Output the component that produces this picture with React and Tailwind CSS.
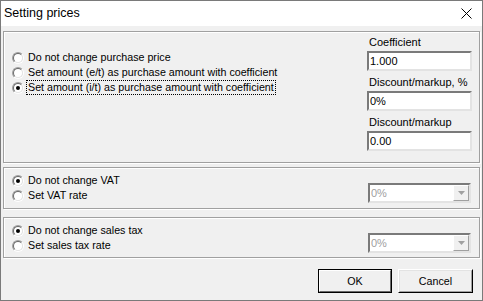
import React from "react";

const font = "font-['Liberation_Sans',Arial,sans-serif]";

function Radio({ checked }) {
  return (
    <span className="w-[12px] h-[12px] shrink-0 rounded-full border border-t-[#a0a0a0] border-l-[#a0a0a0] border-r-[#ffffff] border-b-[#ffffff] bg-[#e3e3e3] flex items-center justify-center">
      <span className="w-[10px] h-[10px] rounded-full bg-white border border-t-[#696969] border-l-[#696969] border-r-[#e3e3e3] border-b-[#e3e3e3] flex items-center justify-center">
        {checked && <span className="w-[4px] h-[4px] rounded-full bg-black" />}
      </span>
    </span>
  );
}

function Option({ checked, label, focused }) {
  return (
    <div className="flex items-center h-[15px]">
      <Radio checked={checked} />
      <span
        className={
          focused
            ? "ml-[3px] px-[1px] leading-[13px] outline-1 outline-dotted outline-black"
            : "ml-[4px] leading-[13px]"
        }
      >
        {label}
      </span>
    </div>
  );
}

function Field({ label, value }) {
  return (
    <div className="flex flex-col">
      <span className="leading-[13px] h-[15px] pl-[2px] text-[11px]">{label}</span>
      <div className="w-[105px] h-[20px] bg-white border-2 border-t-[#7a7a7a] border-l-[#7a7a7a] border-r-[#e3e3e3] border-b-[#e3e3e3] flex items-center pl-[1px] text-[11px]">
        {value}
      </div>
    </div>
  );
}

function Combo() {
  return (
    <div className="w-[103px] h-[20px] mt-[15px] bg-white border-2 border-t-[#7a7a7a] border-l-[#7a7a7a] border-r-[#e3e3e3] border-b-[#e3e3e3] flex items-center">
      <span className="flex-1 pl-[1px] text-[#a0a0a0] text-[11px]">0%</span>
      <span className="w-[16px] h-full bg-[#f0f0f0] border border-t-[#ffffff] border-l-[#ffffff] border-r-[#a0a0a0] border-b-[#a0a0a0] flex items-center justify-center">
        <svg width="7" height="4" viewBox="0 0 7 4">
          <path d="M0 0h7L3.5 4z" fill="#a0a0a0" />
        </svg>
      </span>
    </div>
  );
}

const panel =
  "border border-[#a0a0a0] shadow-[inset_1px_1px_0_#ffffff,1px_1px_0_#ffffff]";

export default function App() {
  return (
    <div
      className={`${font} text-[10.7px] text-black w-[483px] h-[301px] border border-[#7a7a7a] flex flex-col bg-[#f0f0f0]`}
    >
      {/* Title bar */}
      <div className="h-[25px] bg-white flex items-center justify-between pl-[3px] pr-[10px] shrink-0">
        <span className="text-[12.5px]">Setting prices</span>
        <svg width="11" height="11" viewBox="0 0 11 11">
          <path d="M0.5 0.5l10 10M10.5 0.5l-10 10" stroke="#000" strokeWidth="1" />
        </svg>
      </div>

      <div className="flex flex-col px-[2px] pt-[5px]">
        {/* Purchase price */}
        <div className={`${panel} h-[132px] flex justify-between`}>
          <div className="flex flex-col pl-[8px] pt-[18px]">
            <Option label="Do not change purchase price" />
            <Option label="Set amount (e/t) as purchase amount with coefficient" />
            <Option checked focused label="Set amount (i/t) as purchase amount with coefficient" />
          </div>
          <div className="flex flex-col gap-[5px] pt-[4px] pr-[7px]">
            <Field label="Coefficient" value="1.000" />
            <Field label="Discount/markup, %" value="0%" />
            <Field label="Discount/markup" value="0.00" />
          </div>
        </div>

        {/* VAT */}
        <div className={`${panel} mt-[4px] h-[42px] flex items-start justify-between px-[8px]`}>
          <div className="flex flex-col pt-[5px]">
            <Option checked label="Do not change VAT" />
            <Option label="Set VAT rate" />
          </div>
          <Combo />
        </div>

        {/* Sales tax */}
        <div className={`${panel} mt-[8px] h-[41px] flex items-start justify-between px-[8px]`}>
          <div className="flex flex-col pt-[5px]">
            <Option checked label="Do not change sales tax" />
            <Option label="Set sales tax rate" />
          </div>
          <Combo />
        </div>

        {/* Buttons */}
        <div className="flex justify-end gap-[6px] mt-[11px] pr-[7px]">
          <button className="w-[74px] h-[24px] border border-black bg-[#f0f0f0] p-0">
            <span className="flex w-full h-full items-center justify-center border border-t-[#ffffff] border-l-[#ffffff] border-r-[#696969] border-b-[#696969]">
              OK
            </span>
          </button>
          <button className="w-[75px] h-[24px] bg-[#f0f0f0] p-0 border border-t-[#ffffff] border-l-[#ffffff] border-r-[#000000] border-b-[#000000]">
            <span className="flex w-full h-full items-center justify-center border border-t-[#e3e3e3] border-l-[#e3e3e3] border-r-[#a0a0a0] border-b-[#a0a0a0]">
              Cancel
            </span>
          </button>
        </div>
      </div>
    </div>
  );
}
